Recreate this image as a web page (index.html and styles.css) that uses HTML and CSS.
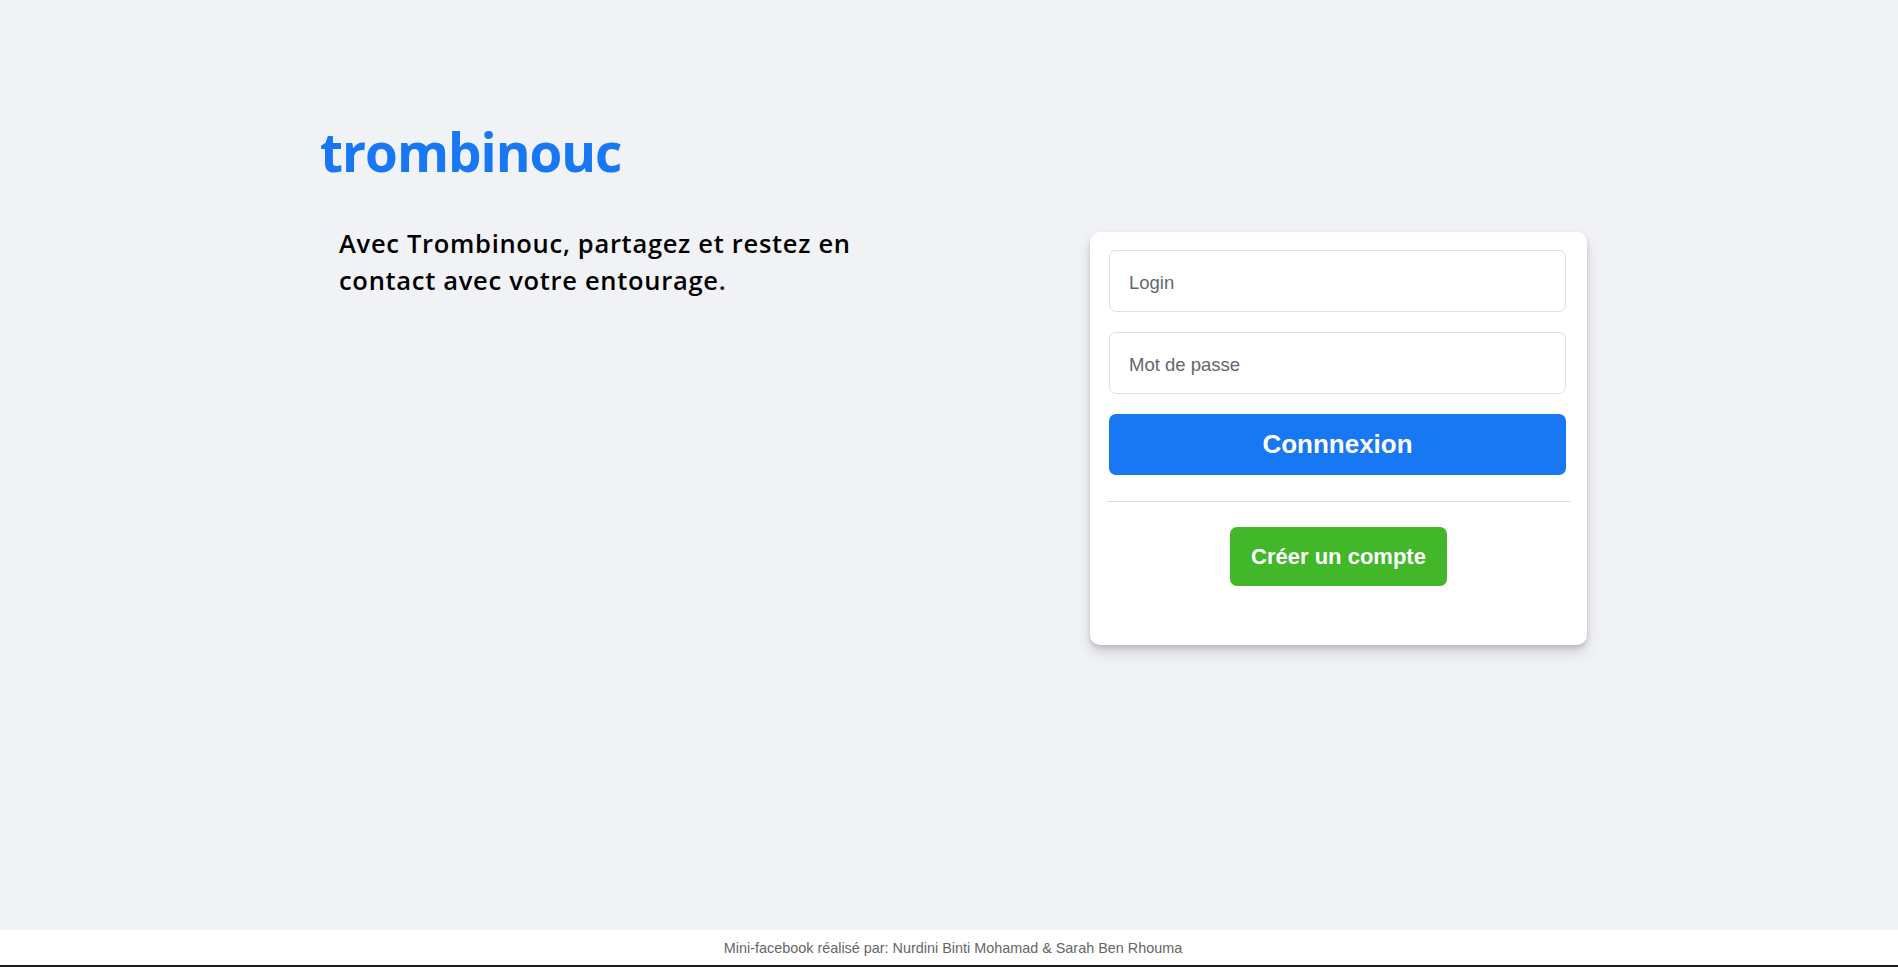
FILE: index.html
```html
<!DOCTYPE html>
<html lang="fr">
<head>
<meta charset="utf-8">
<title>trombinouc</title>
<link rel="stylesheet" href="styles.css">
</head>
<body>
<div class="page">
  <main class="main">
    <div class="wrap">
      <h1 class="logo">trombinouc</h1>
      <div class="row">
        <p class="tagline">Avec Trombinouc, partagez et restez en contact avec votre entourage.</p>
        <form class="card">
          <input class="field" type="text" placeholder="Login">
          <input class="field" type="password" placeholder="Mot de passe">
          <button class="btn-login" type="button">Connnexion</button>
          <div class="divider"></div>
          <div class="create-wrap">
            <button class="btn-create" type="button">Créer un compte</button>
          </div>
        </form>
      </div>
    </div>
  </main>
  <footer class="footer">Mini-facebook réalisé par: Nurdini Binti Mohamad &amp; Sarah Ben Rhouma</footer>
</div>
</body>
</html>
```
FILE: styles.css
```css
html, body {
  margin: 0;
  padding: 0;
}
body {
  background: #f0f2f5;
  font-family: "Open Sans", "Liberation Sans", sans-serif;
  color: #1c1e21;
}
.page {
  min-height: 100vh;
  display: flex;
  flex-direction: column;
}
.main {
  flex: 1;
  padding-top: 120px;
}
.wrap {
  width: 1276px;
  margin: 0 auto;
  padding-left: 9px;
  box-sizing: border-box;
}
.logo {
  margin: 0;
  font-family: "Open Sans", sans-serif;
  font-weight: 700;
  font-size: 53px;
  line-height: 64px;
  color: #1877f2;
  letter-spacing: -1px;
}
.row {
  display: flex;
  align-items: flex-start;
  margin-top: 41px;
}
.tagline {
  margin: 0;
  padding-left: 19px;
  width: 580px;
  font-family: "Open Sans", sans-serif;
  font-weight: 600;
  font-size: 25.5px;
  line-height: 37px;
  letter-spacing: 0.7px;
  color: #000;
}
.card {
  margin-left: auto;
  margin-top: 7px;
  width: 497px;
  box-sizing: border-box;
  background: #fff;
  border-radius: 10px;
  padding: 18px 21px 59px 19px;
  box-shadow: 0 3px 5px rgba(0, 0, 0, 0.15), 0 8px 14px rgba(0, 0, 0, 0.12);
  display: flex;
  flex-direction: column;
}
.field {
  height: 62px;
  box-sizing: border-box;
  border: 1px solid #dddfe2;
  border-radius: 7px;
  padding: 3px 19px 0;
  font-family: "Liberation Sans", sans-serif;
  font-size: 18.5px;
  color: #1c1e21;
  background: #fff;
  margin-bottom: 20px;
  outline: none;
}
.field::placeholder {
  color: #62676f;
}
.btn-login {
  height: 61px;
  border: none;
  border-radius: 7px;
  background: #1877f2;
  color: #fff;
  font-family: "Liberation Sans", sans-serif;
  font-weight: 700;
  font-size: 26px;
  cursor: pointer;
}
.divider {
  height: 1px;
  background: #dadde1;
  margin: 26px -5px 25px -2px;
}
.create-wrap {
  display: flex;
  justify-content: center;
  padding-left: 2px;
}
.btn-create {
  width: 217px;
  height: 59px;
  border: none;
  border-radius: 7px;
  background: #42b72a;
  color: #fff;
  font-family: "Liberation Sans", sans-serif;
  font-weight: 700;
  font-size: 22px;
  cursor: pointer;
}
.footer {
  height: 37px;
  box-sizing: border-box;
  background: #fff;
  border-bottom: 2px solid #1c1c1c;
  text-align: center;
  font-family: "Liberation Sans", sans-serif;
  font-size: 14.4px;
  line-height: 36px;
  color: #666;
  padding-left: 8px;
}
```
